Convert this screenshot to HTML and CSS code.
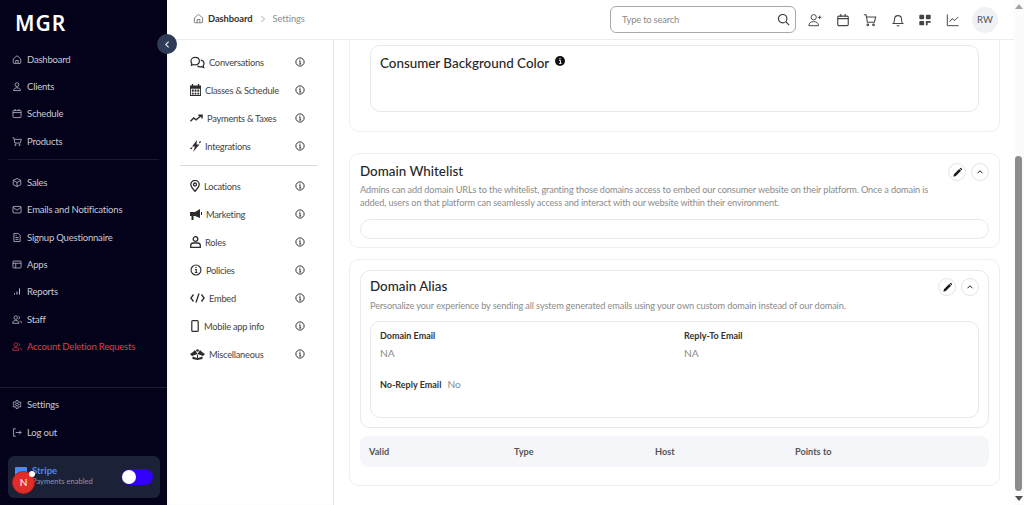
FILE: index.html
```html
<!DOCTYPE html>
<html lang="en">
<head>
    <meta charset="UTF-8">
    <meta name="viewport" content="width=device-width, initial-scale=1.0">
    <title>Settings</title>
    <link rel="stylesheet" href="styles.css">
</head>
<body>
    <svg class="defs" width="0" height="0">
        <symbol id="info" viewBox="0 0 16 16"><circle cx="8" cy="8" r="6.6" fill="none" stroke="currentColor" stroke-width="1.5"/><path d="M6.6 7.2H8.3V11.2M6.5 11.3H10" fill="none" stroke="currentColor" stroke-width="1.4"/><circle cx="8" cy="4.8" r="1" fill="currentColor"/></symbol>
        <symbol id="home" viewBox="0 0 16 16"><path d="M2 7 8 2l6 5v6a1.2 1.2 0 0 1-1.2 1.2H3.2A1.2 1.2 0 0 1 2 13Z M6 14V9.5h4V14" fill="none" stroke="currentColor" stroke-width="1.2"/></symbol>
        <symbol id="pencil" viewBox="0 0 16 16"><path d="M2 14l.8-3.6 7.6-7.6 2.8 2.8-7.6 7.6ZM11.2 2l.8-.6a1 1 0 0 1 1.2 0l1.4 1.4a1 1 0 0 1 0 1.2l-.6.8Z" fill="currentColor"/></symbol>
        <symbol id="chevron" viewBox="0 0 16 16"><path d="M4 10l4-4 4 4" fill="none" stroke="currentColor" stroke-width="1.6"/></symbol>
    </svg>

    <aside class="sidebar">
        <div class="logo">MGR</div>
        <nav class="nav">
            <a class="nav-item"><svg viewBox="0 0 16 16"><use href="#home"/></svg>Dashboard</a>
            <a class="nav-item"><svg viewBox="0 0 16 16" fill="none" stroke="currentColor" stroke-width="1.2"><circle cx="8" cy="5" r="3"/><path d="M2.5 14.5c0-3 2.5-4.5 5.5-4.5s5.5 1.5 5.5 4.5Z"/></svg>Clients</a>
            <a class="nav-item"><svg viewBox="0 0 16 16" fill="none" stroke="currentColor" stroke-width="1.2"><rect x="1.5" y="3" width="13" height="11.5" rx="1.5"/><path d="M1.5 6.5h13M5 1v3M11 1v3"/></svg>Schedule</a>
            <a class="nav-item"><svg viewBox="0 0 16 16" fill="none" stroke="currentColor" stroke-width="1.2"><path d="M1 2h2l1.5 8.5h8.5L15 4.5H4"/><circle cx="5.5" cy="13.5" r="1"/><circle cx="12" cy="13.5" r="1"/></svg>Products</a>
            <div class="nav-rule"></div>
            <a class="nav-item"><svg viewBox="0 0 16 16" fill="none" stroke="currentColor" stroke-width="1.2"><path d="M8 1.5 14 4.5v7L8 14.5 2 11.5v-7ZM2 4.5 8 8l6-3.5M8 8v6.5"/></svg>Sales</a>
            <a class="nav-item"><svg viewBox="0 0 16 16" fill="none" stroke="currentColor" stroke-width="1.2"><rect x="1.5" y="3" width="13" height="10.5" rx="1.5"/><path d="M1.5 4.5 8 9l6.5-4.5"/></svg>Emails and Notifications</a>
            <a class="nav-item"><svg viewBox="0 0 16 16" fill="none" stroke="currentColor" stroke-width="1.2"><path d="M3 1.5h7l3 3v10H3Z"/><path d="M5.5 8h5M5.5 11h5M5.5 5h2"/></svg>Signup Questionnaire</a>
            <a class="nav-item"><svg viewBox="0 0 16 16" fill="none" stroke="currentColor" stroke-width="1.2"><rect x="1.5" y="2.5" width="13" height="11" rx="1"/><path d="M1.5 6h13M6 6v7.5"/></svg>Apps</a>
            <a class="nav-item"><svg viewBox="0 0 16 16" fill="none" stroke="currentColor" stroke-width="1.5"><path d="M4 13v-2M8 13V8M12 13V3"/></svg>Reports</a>
            <a class="nav-item"><svg viewBox="0 0 16 16" fill="none" stroke="currentColor" stroke-width="1.2"><circle cx="6" cy="5" r="2.8"/><path d="M1 14c0-3 2-4.5 5-4.5s5 1.5 5 4.5ZM10.5 2.5a2.8 2.8 0 0 1 0 5M12.5 9.8c1.5.6 2.5 2 2.5 4.2"/></svg>Staff</a>
            <a class="nav-item nav-item-danger"><svg viewBox="0 0 16 16" fill="none" stroke="currentColor" stroke-width="1.2"><circle cx="6" cy="5" r="2.8"/><path d="M1 14c0-3 2-4.5 5-4.5s5 1.5 5 4.5ZM10.5 2.5a2.8 2.8 0 0 1 0 5M12.5 9.8c1.5.6 2.5 2 2.5 4.2"/></svg>Account Deletion Requests</a>
        </nav>
        <div class="sidebar-bottom">
            <a class="nav-item"><svg viewBox="0 0 16 16" fill="none" stroke="currentColor" stroke-width="1.2"><circle cx="8" cy="8" r="2.3"/><path d="M6.8 1.5h2.4l.4 2 1.7 1 2-.7 1.2 2.1-1.6 1.4v1.4l1.6 1.4-1.2 2.1-2-.7-1.7 1-.4 2H6.8l-.4-2-1.7-1-2 .7-1.2-2.1 1.6-1.4V7.3L1.5 5.9l1.2-2.1 2 .7 1.7-1Z"/></svg>Settings</a>
            <a class="nav-item"><svg viewBox="0 0 16 16" fill="none" stroke="currentColor" stroke-width="1.2"><path d="M6 2H2.5v12H6M6 8h8.5M11.5 5l3 3-3 3"/></svg>Log out</a>
            <div class="stripe">
                <span class="stripe-logo"></span>
                <div class="stripe-text">
                    <strong>Stripe</strong>
                    <span>Payments enabled</span>
                </div>
                <span class="toggle"><i></i></span>
                <span class="stripe-badge">N</span>
                <span class="stripe-dot"></span>
            </div>
        </div>
    </aside>

    <button class="collapse" aria-label="Collapse"><svg viewBox="0 0 16 16" width="9" height="9" fill="none" stroke="currentColor" stroke-width="2"><path d="M10 3 5 8l5 5"/></svg></button>

    <div class="page">
        <header class="topbar">
            <div class="crumbs">
                <svg class="crumb-home" viewBox="0 0 16 16" width="11" height="11"><use href="#home"/></svg>
                <span class="crumb-current">Dashboard</span>
                <svg class="crumb-sep" viewBox="0 0 16 16" width="8" height="8" fill="none" stroke="currentColor" stroke-width="1.5"><path d="M5 2l6 6-6 6"/></svg>
                <span>Settings</span>
            </div>
            <div class="search">
                <span>Type to search</span>
                <svg viewBox="0 0 16 16" width="13" height="13" fill="none" stroke="currentColor" stroke-width="1.4"><circle cx="7" cy="7" r="5.2"/><path d="M11 11l4 4"/></svg>
            </div>
            <div class="top-icons">
                <svg viewBox="0 0 16 16" fill="none" stroke="currentColor" stroke-width="1.1"><circle cx="6.5" cy="4.8" r="3"/><path d="M1 14.5c0-3.2 2.5-4.7 5.5-4.7s5.5 1.5 5.5 4.7ZM13.3 3v4M11.3 5h4"/></svg>
                <svg viewBox="0 0 16 16" fill="none" stroke="currentColor" stroke-width="1.3"><rect x="2" y="3.5" width="12" height="11" rx="1.3"/><path d="M2 6.5h12M5.5 1v3.5M10.5 1v3.5"/></svg>
                <svg viewBox="0 0 16 16" fill="none" stroke="currentColor" stroke-width="1.2"><path d="M1 2h2.5l1.5 8.5h8L14.5 4.5H4"/><circle cx="5.5" cy="13.5" r="1"/><circle cx="12" cy="13.5" r="1"/></svg>
                <svg viewBox="0 0 16 16" fill="none" stroke="currentColor" stroke-width="1.2"><path d="M2.5 12c1.5-1.5 1.5-3 1.5-5a4 4 0 0 1 8 0c0 2 0 3.5 1.5 5ZM6.5 14.5h3"/></svg>
                <svg viewBox="0 0 16 16" fill="currentColor"><rect x="1.5" y="2" width="5.5" height="5" rx="1"/><rect x="9" y="2" width="5.5" height="5" rx="1"/><rect x="1.5" y="9" width="5.5" height="5" rx="1"/><path d="M9 9h5.5v2H11v3H9Z"/></svg>
                <svg viewBox="0 0 16 16" fill="none" stroke="currentColor" stroke-width="1.1"><path d="M1.5 1.5v13h13M4 10l3-3.5 3 2 4-4"/></svg>
                <span class="avatar">RW</span>
            </div>
        </header>

        <div class="content">
            <nav class="menu">
                <a class="menu-item"><svg width="15" height="13" viewBox="0 0 16 14" fill="none" stroke="currentColor" stroke-width="1.3"><path d="M1 5.5C1 3 3 1.5 5.5 1.5S10 3 10 5.5 8 9.5 5.5 9.5c-.7 0-1.3-.1-1.9-.3L1.5 10l.3-2A4 4 0 0 1 1 5.5Z"/><path d="M11.5 4.5c2 .3 3.5 1.7 3.5 3.5 0 .9-.3 1.6-.8 2.2l.5 2.3-2.4-1c-1.7.5-3.5 0-4.5-1.2"/></svg><span>Conversations</span><svg class="menu-info"><use href="#info"/></svg></a>
                <a class="menu-item"><svg width="11" height="12" viewBox="0 0 12 13" fill="currentColor"><path d="M2 0h1.5v1.5h5V0H10v1.5h2V13H0V1.5h2ZM1 5v7h10V5Z"/><path d="M2 6h2v2.5H2ZM5 6h2v2.5H5ZM8 6h2v2.5H8ZM2 9.5h2V11.5H2ZM5 9.5h2V11.5H5ZM8 9.5h2V11.5H8Z"/></svg><span>Classes &amp; Schedule</span><svg class="menu-info"><use href="#info"/></svg></a>
                <a class="menu-item"><svg width="13" height="9" viewBox="0 0 14 9" fill="none" stroke="currentColor" stroke-width="1.5"><path d="M.5 7.5 4 4l2.5 2L12.5 1M9 1h4v3.5"/></svg><span>Payments &amp; Taxes</span><svg class="menu-info"><use href="#info"/></svg></a>
                <a class="menu-item"><svg width="11" height="12" viewBox="0 0 11 12" fill="currentColor"><path d="M7 0 2 6.5h3L3 12l6.5-7.5H6.5Z"/><path d="M0 8.5 2 7l.5 1-1.5 1.5ZM9 2l1.5-1 .5 1L9.5 3.5Z"/></svg><span>Integrations</span><svg class="menu-info"><use href="#info"/></svg></a>
                <div class="menu-rule"></div>
                <a class="menu-item"><svg width="10" height="12" viewBox="0 0 10 12" fill="none" stroke="currentColor" stroke-width="1.3"><path d="M5 11.3C3 9 .8 6.8.8 4.6a4.2 4.2 0 0 1 8.4 0C9.2 6.8 7 9 5 11.3Z"/><circle cx="5" cy="4.5" r="1.5"/></svg><span>Locations</span><svg class="menu-info"><use href="#info"/></svg></a>
                <a class="menu-item"><svg width="12" height="11" viewBox="0 0 12 11" fill="currentColor"><path d="M0 3h5l5-3v9L5 7H3.5v4H1.5V7H0ZM11 3h1v3h-1Z"/></svg><span>Marketing</span><svg class="menu-info"><use href="#info"/></svg></a>
                <a class="menu-item"><svg width="11" height="12" viewBox="0 0 11 12" fill="none" stroke="currentColor" stroke-width="1.3"><circle cx="5.5" cy="3" r="2.3"/><path d="M.7 11.3V9.5C.7 8 2 7 3.5 7h4C9 7 10.3 8 10.3 9.5v1.8Z"/></svg><span>Roles</span><svg class="menu-info"><use href="#info"/></svg></a>
                <a class="menu-item"><svg width="12" height="12" viewBox="0 0 16 16"><use href="#info"/></svg><span>Policies</span><svg class="menu-info"><use href="#info"/></svg></a>
                <a class="menu-item"><svg width="15" height="10" viewBox="0 0 15 10" fill="none" stroke="currentColor" stroke-width="1.3"><path d="M3.5 1.5.9 5l2.6 3.5M11.5 1.5 14.1 5l-2.6 3.5M9 .5 6 9.5"/></svg><span>Embed</span><svg class="menu-info"><use href="#info"/></svg></a>
                <a class="menu-item"><svg width="10" height="12" viewBox="0 0 8 12" fill="none" stroke="currentColor" stroke-width="1.2"><rect x=".8" y=".6" width="6.4" height="10.8" rx="1"/></svg><span>Mobile app info</span><svg class="menu-info"><use href="#info"/></svg></a>
                <a class="menu-item"><svg width="15" height="11" viewBox="0 0 15 11" fill="currentColor"><path d="M3 3 0 5l2 2 5.5-2L5 1ZM12 3l3 2-2 2-5.500-2L10 1ZM2.500 7.500 7 9V5.800l.5-.2.5.2V9l4.500-1.500V10L7.500 11 2.500 10Z"/><circle cx="7.5" cy="1.5" r="1.3"/></svg><span>Miscellaneous</span><svg class="menu-info"><use href="#info"/></svg></a>
            </nav>

            <main class="main">
                <section class="card card-clipped">
                    <div class="box box-color">
                        <h3 class="box-title">Consumer Background Color <svg viewBox="0 0 16 16" width="10" height="10"><circle cx="8" cy="8" r="8" fill="#111"/><path d="M6.5 7h2.300v4.500M6.500 11.800h4" stroke="#fff" stroke-width="1.5" fill="none"/><circle cx="8" cy="4.3" r="1.1" fill="#fff"/></svg></h3>
                    </div>
                </section>

                <section class="card card-whitelist">
                    <div class="card-head">
                        <div>
                            <h3 class="card-title">Domain Whitelist</h3>
                            <p class="card-desc">Admins can add domain URLs to the whitelist, granting those domains access to embed our consumer website on their platform. Once a domain is added, users on that platform can seamlessly access and interact with our website within their environment.</p>
                        </div>
                        <div class="card-actions">
                            <button class="round"><svg viewBox="0 0 16 16" width="11" height="11"><use href="#pencil"/></svg></button>
                            <button class="round"><svg viewBox="0 0 16 16" width="10" height="10"><use href="#chevron"/></svg></button>
                        </div>
                    </div>
                    <div class="pill"></div>
                </section>

                <section class="card card-alias">
                    <div class="box box-alias">
                        <div class="card-head">
                            <div>
                                <h3 class="card-title">Domain Alias</h3>
                                <p class="card-desc">Personalize your experience by sending all system generated emails using your own custom domain instead of our domain.</p>
                            </div>
                            <div class="card-actions">
                                <button class="round"><svg viewBox="0 0 16 16" width="11" height="11"><use href="#pencil"/></svg></button>
                                <button class="round"><svg viewBox="0 0 16 16" width="10" height="10"><use href="#chevron"/></svg></button>
                            </div>
                        </div>
                        <div class="box box-fields">
                            <div class="fields">
                                <div><label>Domain Email</label><p>NA</p></div>
                                <div><label>Reply-To Email</label><p>NA</p></div>
                            </div>
                            <div class="field-inline"><label>No-Reply Email</label><p>No</p></div>
                        </div>
                    </div>
                    <div class="table-head">
                        <span>Valid</span><span>Type</span><span>Host</span><span>Points to</span>
                    </div>
                </section>
            </main>
        </div>
    </div>

    <div class="scrollbar">
        <svg viewBox="0 0 8 5" width="8" height="5"><path d="M4 0 8 5H0Z" fill="#a3a3a3"/></svg>
        <div class="scroll-track"><div class="scroll-thumb"></div></div>
        <svg viewBox="0 0 8 5" width="8" height="5"><path d="M4 5 8 0H0Z" fill="#505050"/></svg>
    </div>
</body>
</html>
```

FILE: styles.css
```css
* {
    box-sizing: border-box;
}
html, body {
    height: 505px;
    overflow: hidden;
}
body {
    font-family: Lato, "Noto Sans", sans-serif;
    background-color: #fff;
    color: #333;
    margin: 0;
    display: flex;
}
h3, p {
    margin: 0;
}
.defs {
    position: absolute;
}

/* sidebar */
.sidebar {
    width: 167px;
    flex: none;
    height: 505px;
    background-color: #03021a;
    color: #c8cad4;
    display: flex;
    flex-direction: column;
}
.logo {
    height: 45.7px;
    padding: 8px 0 0 15px;
    font-family: "Noto Sans", sans-serif;
    font-size: 21px;
    font-weight: 600;
    line-height: 30px;
    letter-spacing: 1px;
    color: #fff;
}
.nav-item {
    height: 27.3px;
    padding-left: 12px;
    display: flex;
    align-items: center;
    gap: 5px;
    font-size: 9.5px;
    letter-spacing: -0.2px;
    white-space: nowrap;
}
.nav-item svg {
    width: 10px;
    height: 11px;
    flex: none;
}
.nav-item-danger {
    color: #e23a4e;
}
.nav-rule {
    height: 1px;
    margin: 4px 8px 9px;
    background-color: #171a30;
}
.sidebar-bottom {
    margin-top: 27.3px;
    border-top: 1px solid #1c1f35;
    padding-top: 3px;
}
.stripe {
    position: relative;
    height: 42px;
    margin: 10px 7px 0 8px;
    padding: 0 7px;
    background-color: #1b2238;
    border-radius: 6px;
    display: flex;
    align-items: center;
}
.stripe-logo {
    width: 12px;
    height: 13px;
    margin-right: 5px;
    margin-top: -7px;
    background-color: #4a8cf0;
    border-radius: 1px;
}
.stripe-text {
    flex: 1;
    display: flex;
    flex-direction: column;
    margin-top: -1px;
    font-size: 7.6px;
    line-height: 11px;
    color: #8f93a3;
}
.stripe-text strong {
    font-size: 9.6px;
    font-weight: 700;
    color: #4f86ee;
}
.toggle {
    width: 31px;
    height: 16px;
    padding: 1px 0;
    background-color: #3300ff;
    border-radius: 8px;
}
.toggle i {
    display: block;
    width: 14px;
    height: 14px;
    background-color: #fff;
    border-radius: 50%;
}
.stripe-badge {
    position: absolute;
    left: 4px;
    top: 15px;
    width: 23px;
    height: 23px;
    background-color: #e02d2a;
    border: 1px solid #b8201d;
    border-radius: 50%;
    color: #fff;
    font-size: 10px;
    line-height: 21px;
    text-align: center;
}
.stripe-dot {
    position: absolute;
    left: 21px;
    top: 15px;
    width: 6px;
    height: 6px;
    background-color: #fff;
    border-radius: 50%;
}
.collapse {
    position: absolute;
    left: 157px;
    top: 34px;
    width: 20px;
    height: 20px;
    padding: 0;
    border: none;
    border-radius: 50%;
    background-color: #2e3c58;
    color: #e6e8ee;
    display: flex;
    align-items: center;
    justify-content: center;
}

/* top bar */
.page {
    flex: 1;
    min-width: 0;
    display: flex;
    flex-direction: column;
}
.topbar {
    height: 40px;
    flex: none;
    border-bottom: 1px solid #ececec;
    padding-right: 16px;
    display: flex;
    align-items: center;
}
.crumbs {
    flex: 1;
    padding: 0 0 2px 26px;
    display: flex;
    align-items: center;
    font-size: 9.4px;
    letter-spacing: -0.1px;
    color: #8d8d8d;
}
.crumb-home {
    color: #666;
    margin-right: 4px;
}
.crumb-current {
    color: #333;
    font-weight: 700;
}
.crumb-sep {
    margin: 0 5px 0 7px;
    color: #888;
}
.search {
    width: 186px;
    height: 27px;
    margin-right: 12px;
    padding: 0 5px 0 11px;
    border: 1px solid #a9a9a9;
    border-radius: 6px;
    display: flex;
    align-items: center;
    justify-content: space-between;
    font-size: 9.4px;
    letter-spacing: -0.2px;
    color: #8a8a8a;
}
.search svg {
    color: #333;
}
.top-icons {
    display: flex;
    align-items: center;
    gap: 13.5px;
    color: #444;
}
.top-icons svg {
    width: 14px;
    height: 14px;
}
.avatar {
    width: 26px;
    height: 26px;
    margin-left: -1px;
    background-color: #f0f1f4;
    border-radius: 50%;
    font-size: 9.6px;
    line-height: 26px;
    text-align: center;
    color: #555;
}

/* settings menu */
.content {
    flex: 1;
    min-height: 0;
    display: flex;
}
.menu {
    width: 167px;
    flex: none;
    padding: 8px 16px 0 13px;
    border-right: 1px solid #e4e4e4;
    box-shadow: inset 2px 0 2px rgba(0, 0, 0, 0.03);
}
.menu-item {
    height: 28px;
    padding: 0 10px;
    display: flex;
    align-items: center;
    gap: 4px;
    font-size: 9.3px;
    letter-spacing: -0.25px;
    color: #444;
}
.menu-item svg {
    flex: none;
    color: #2c2c2c;
}
.menu-item span {
    flex: 1;
    white-space: nowrap;
}
.menu-item .menu-info {
    width: 10px;
    height: 10px;
    margin-right: 2px;
}
.menu-rule {
    height: 1px;
    margin: 5px 0 6px;
    background-color: #d9d9d9;
}

/* main column */
.main {
    flex: 1;
    min-width: 0;
    padding: 0 14px 0 15px;
    overflow: hidden;
}
.card {
    border: 1px solid #eeeeee;
    border-radius: 10px;
    background-color: #fff;
}
.card-clipped {
    margin-top: -16px;
    height: 108px;
    padding: 20px 20px 0;
}
.box {
    border: 1px solid #e9e9e9;
    border-radius: 10px;
}
.box-color {
    height: 67px;
    padding: 8px 9px;
}
.box-title,
.card-title {
    font-size: 13.4px;
    font-weight: 500;
    line-height: 18px;
    color: #262626;
}
.box-title svg {
    margin-left: 3px;
    vertical-align: 2px;
}
.card-whitelist {
    margin-top: 21px;
    height: 95px;
    padding: 8px 10px 0;
}
.card-head {
    display: flex;
    justify-content: space-between;
}
.card-desc {
    max-width: 574px;
    margin-top: 3px;
    font-size: 9.2px;
    letter-spacing: -0.12px;
    line-height: 13px;
    color: #8b8b8b;
}
.card-actions {
    display: flex;
    gap: 5px;
    padding-top: 1px;
    flex: none;
}
.round {
    width: 18px;
    height: 18px;
    padding: 0;
    border: 1px solid #e4e4e4;
    border-radius: 50%;
    background-color: #fff;
    color: #1c1c1c;
    display: flex;
    align-items: center;
    justify-content: center;
}
.pill {
    height: 20px;
    margin-top: 10px;
    border: 1px solid #e9e9e9;
    border-radius: 10px;
}
.card-alias {
    margin-top: 11px;
    height: 227px;
    padding: 10px 10px 0;
}
.box-alias {
    height: 158px;
    padding: 6px 9px 0;
}
.box-alias .card-desc {
    max-width: none;
    margin-top: 4px;
}
.box-fields {
    height: 97px;
    margin-top: 9px;
    padding: 7px 9px;
}
.fields {
    display: grid;
    grid-template-columns: 304px 1fr;
}
.fields label,
.field-inline label {
    display: block;
    font-size: 9px;
    font-weight: 700;
    line-height: 13px;
    color: #333;
}
.fields p,
.field-inline p {
    font-size: 10.2px;
    line-height: 14px;
    color: #8b8b8b;
}
.fields p {
    margin-top: 4px;
}
.field-inline {
    margin-top: 17px;
    display: flex;
    align-items: center;
    gap: 6px;
}
.table-head {
    height: 31px;
    margin-top: 8px;
    padding-left: 9px;
    background-color: #f5f6fa;
    border-radius: 8px;
    display: grid;
    grid-template-columns: 145px 141px 140px 1fr;
    align-items: center;
    font-size: 9.2px;
    font-weight: 700;
    color: #555;
}

/* scrollbar */
.scrollbar {
    width: 10px;
    flex: none;
    padding: 4px 0;
    display: flex;
    flex-direction: column;
    align-items: center;
    background-color: #fbfbfb;
}
.scroll-track {
    flex: 1;
    width: 100%;
    padding: 147px 2px 5px 1px;
}
.scroll-thumb {
    height: 100%;
    background-color: #8c8c8c;
    border-radius: 4px;
}
```
